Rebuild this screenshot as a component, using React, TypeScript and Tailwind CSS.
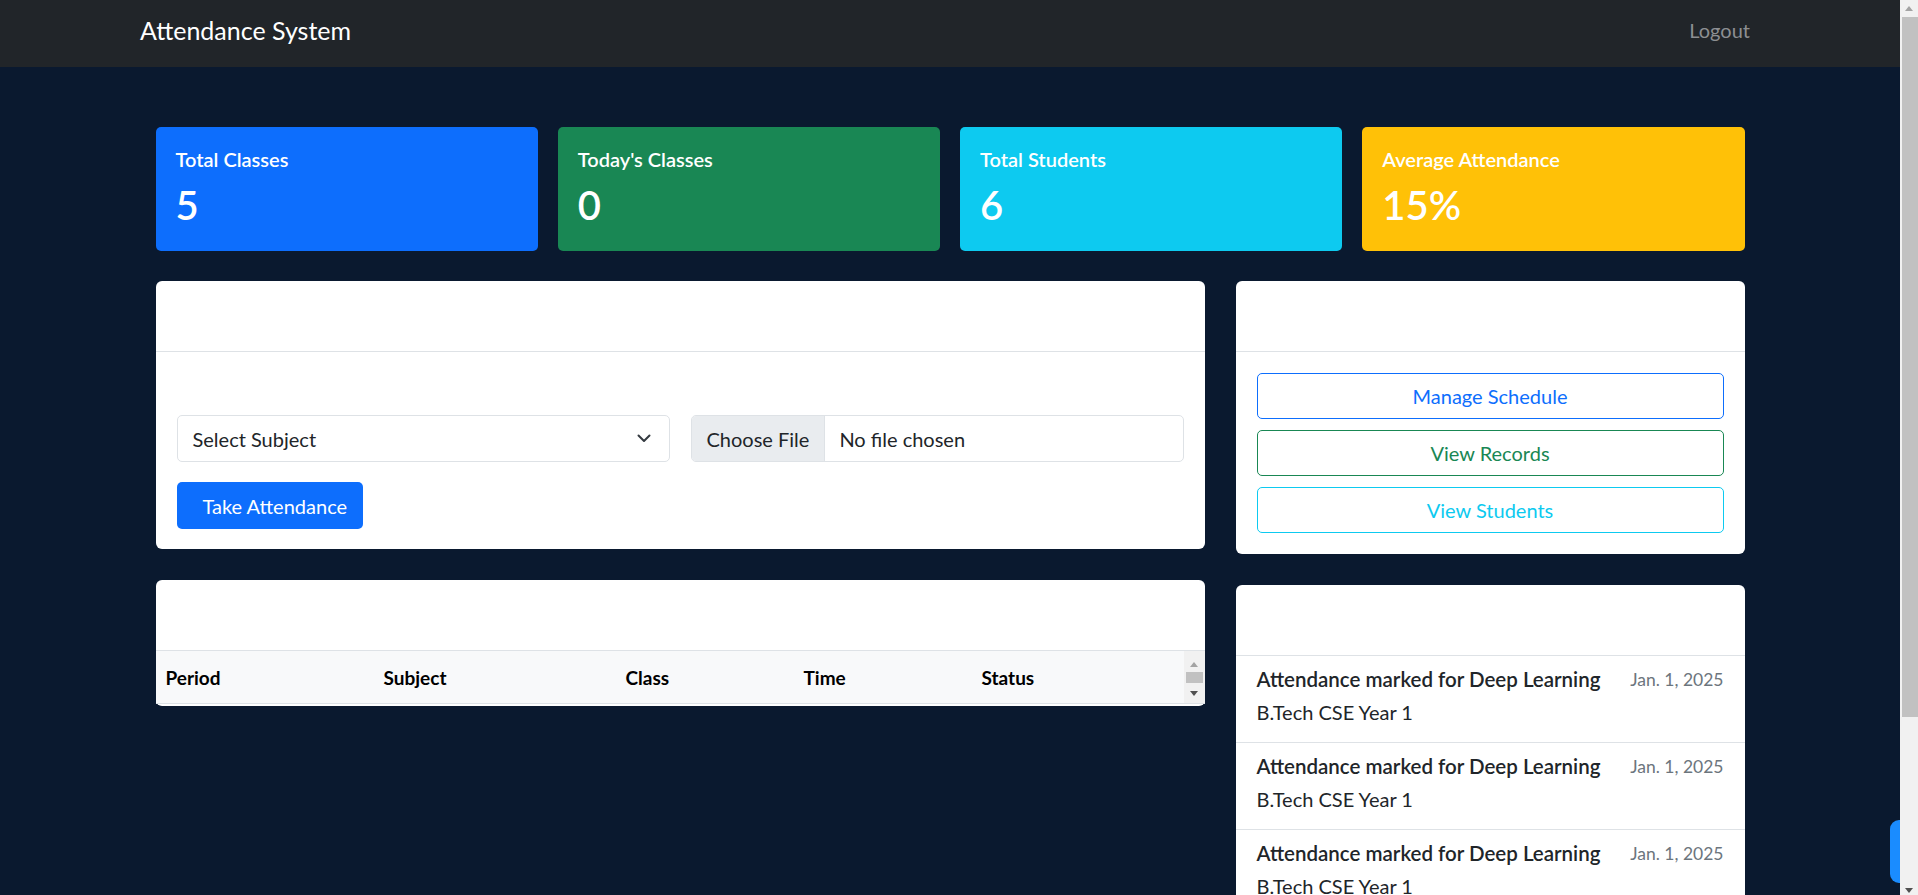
import React from "react";

const STATS = [
  { label: "Total Classes", value: "5", bg: "bg-[#0d6efd]" },
  { label: "Today's Classes", value: "0", bg: "bg-[#198754]" },
  { label: "Total Students", value: "6", bg: "bg-[#0dcaf0]" },
  { label: "Average Attendance", value: "15%", bg: "bg-[#ffc107]" },
];

const TABLE_COLUMNS = ["Period", "Subject", "Class", "Time", "Status"];

const ACTIVITY = [1, 2, 3].map((id) => ({
  id,
  title: "Attendance marked for Deep Learning",
  group: "B.Tech CSE Year 1",
  date: "Jan. 1, 2025",
}));

const ArrowUp = ({ color = "#a3a3a3" }: { color?: string }) => (
  <svg width="8" height="5" viewBox="0 0 8 5">
    <path d="M4 0 L8 5 L0 5 Z" fill={color} />
  </svg>
);

const ArrowDown = ({ color = "#505050" }: { color?: string }) => (
  <svg width="8" height="5" viewBox="0 0 8 5">
    <path d="M0 0 L8 0 L4 5 Z" fill={color} />
  </svg>
);

const CardHeader = () => <div className="h-[71px] border-b border-[#dee2e6]" />;

const Navbar = () => (
  <nav className="h-[67px] bg-[#212529]">
    <div className="mx-auto flex w-[1650px] items-start justify-between px-[15px] pt-[15px]">
      <span className="text-[25px] leading-[30px] text-white">Attendance System</span>
      <a className="px-[10px] text-[20px] leading-[30px] text-[#8d8f92]">Logout</a>
    </div>
  </nav>
);

const StatCards = () => (
  <div className="grid grid-cols-4 gap-x-[20px]">
    {STATS.map((stat) => (
      <div
        key={stat.label}
        className={`h-[124px] rounded-[5px] px-[20px] pt-[20px] text-white ${stat.bg}`}
      >
        <div className="mb-[10px] text-[20px] leading-[24px] font-semibold">{stat.label}</div>
        <div className="text-[40px] leading-[48px] font-semibold">{stat.value}</div>
      </div>
    ))}
  </div>
);

const TakeAttendanceCard = () => (
  <div className="rounded-[6px] bg-white">
    <CardHeader />
    <div className="px-[21px] pt-[63px] pb-[20px]">
      <div className="grid grid-cols-2 gap-x-[21px]">
        <div className="flex h-[47px] items-center justify-between rounded-[5px] border border-[#dee2e6] pr-[18px] pl-[15px] text-[20px] text-[#212529]">
          <span>Select Subject</span>
          <svg width="14" height="9" viewBox="0 0 14 9" fill="none">
            <path d="M1.5 1.5 L7 7 L12.5 1.5" stroke="#343a40" strokeWidth="2" strokeLinecap="round" strokeLinejoin="round" />
          </svg>
        </div>
        <div className="flex h-[47px] items-stretch overflow-hidden rounded-[5px] border border-[#dee2e6] text-[20px] text-[#212529]">
          <span className="flex items-center border-r border-[#dee2e6] bg-[#e9ecef] px-[15px]">Choose File</span>
          <span className="flex items-center px-[14px]">No file chosen</span>
        </div>
      </div>
      <button className="mt-[20px] h-[47px] rounded-[5px] bg-[#0d6efd] pr-[16px] pl-[26px] text-[20px] text-white">
        Take Attendance
      </button>
    </div>
  </div>
);

const ScheduleTableCard = () => (
  <div className="rounded-[6px] bg-white pb-[2px]">
    <CardHeader />
    <div className="flex h-[53px] border-b border-[#dee2e6]">
      <div className="grid flex-1 grid-cols-[218px_242px_178px_178px_1fr] items-center bg-[#f8f9fa] pt-[2px]">
        {TABLE_COLUMNS.map((col) => (
          <div key={col} className="px-[10px] text-[19px] font-bold text-black">
            {col}
          </div>
        ))}
      </div>
      <div className="flex w-[21px] flex-col items-center bg-[#f1f1f1] pt-[11px]">
        <ArrowUp />
        <div className="mt-[5px] h-[11px] w-[17px] bg-[#c1c1c1]" />
        <div className="mt-[8px]">
          <ArrowDown />
        </div>
      </div>
    </div>
  </div>
);

const QuickActionsCard = () => (
  <div className="rounded-[6px] bg-white">
    <CardHeader />
    <div className="flex flex-col gap-[11px] px-[21px] py-[21px]">
      <button className="h-[46px] rounded-[5px] border border-[#0d6efd] text-[20px] text-[#0d6efd]">Manage Schedule</button>
      <button className="h-[46px] rounded-[5px] border border-[#198754] text-[20px] text-[#198754]">View Records</button>
      <button className="h-[46px] rounded-[5px] border border-[#0dcaf0] text-[20px] text-[#0dcaf0]">View Students</button>
    </div>
  </div>
);

const ActivityCard = () => (
  <div className="rounded-[6px] bg-white">
    <CardHeader />
    {ACTIVITY.map((item) => (
      <div key={item.id} className="border-b border-[#dee2e6] px-[21px] pt-[11px] pb-[15px]">
        <div className="flex h-[24px] items-start justify-between">
          <span className="text-[20.5px] leading-[24px] font-semibold text-[#212529]">{item.title}</span>
          <span className="pt-[2px] text-[17.5px] leading-[22px] text-[#6c757d]">{item.date}</span>
        </div>
        <div className="mt-[6px] text-[20px] leading-[30px] text-[#212529]">{item.group}</div>
      </div>
    ))}
  </div>
);

const PageScrollbar = () => (
  <div className="flex w-[18px] shrink-0 flex-col items-center bg-[#f1f1f1]">
    <div className="flex h-[17px] items-center">
      <ArrowUp />
    </div>
    <div className="ml-[1px] h-[700px] w-[16px] bg-[#c1c1c1]" />
    <div className="flex-1" />
    <div className="flex h-[12px] items-end pb-[2px]">
      <ArrowDown />
    </div>
  </div>
);

export default function App() {
  return (
    <div className="flex h-[895px] w-[1918px] overflow-hidden bg-[#0a192f] font-[Lato,'Liberation_Sans',sans-serif]">
      <div className="relative flex-1 overflow-hidden">
        <Navbar />
        <main className="mx-auto mt-[60px] w-[1589px]">
          <StatCards />
          <div className="mt-[30px] grid grid-cols-[1049px_509px] items-start gap-x-[31px]">
            <div className="flex flex-col gap-[31px]">
              <TakeAttendanceCard />
              <ScheduleTableCard />
            </div>
            <div className="flex flex-col gap-[31px]">
              <QuickActionsCard />
              <ActivityCard />
            </div>
          </div>
        </main>
        <div className="absolute top-[820px] right-0 h-[63px] w-[10px] rounded-l-[9px] bg-[#1a8cff]" />
      </div>
      <PageScrollbar />
    </div>
  );
}
